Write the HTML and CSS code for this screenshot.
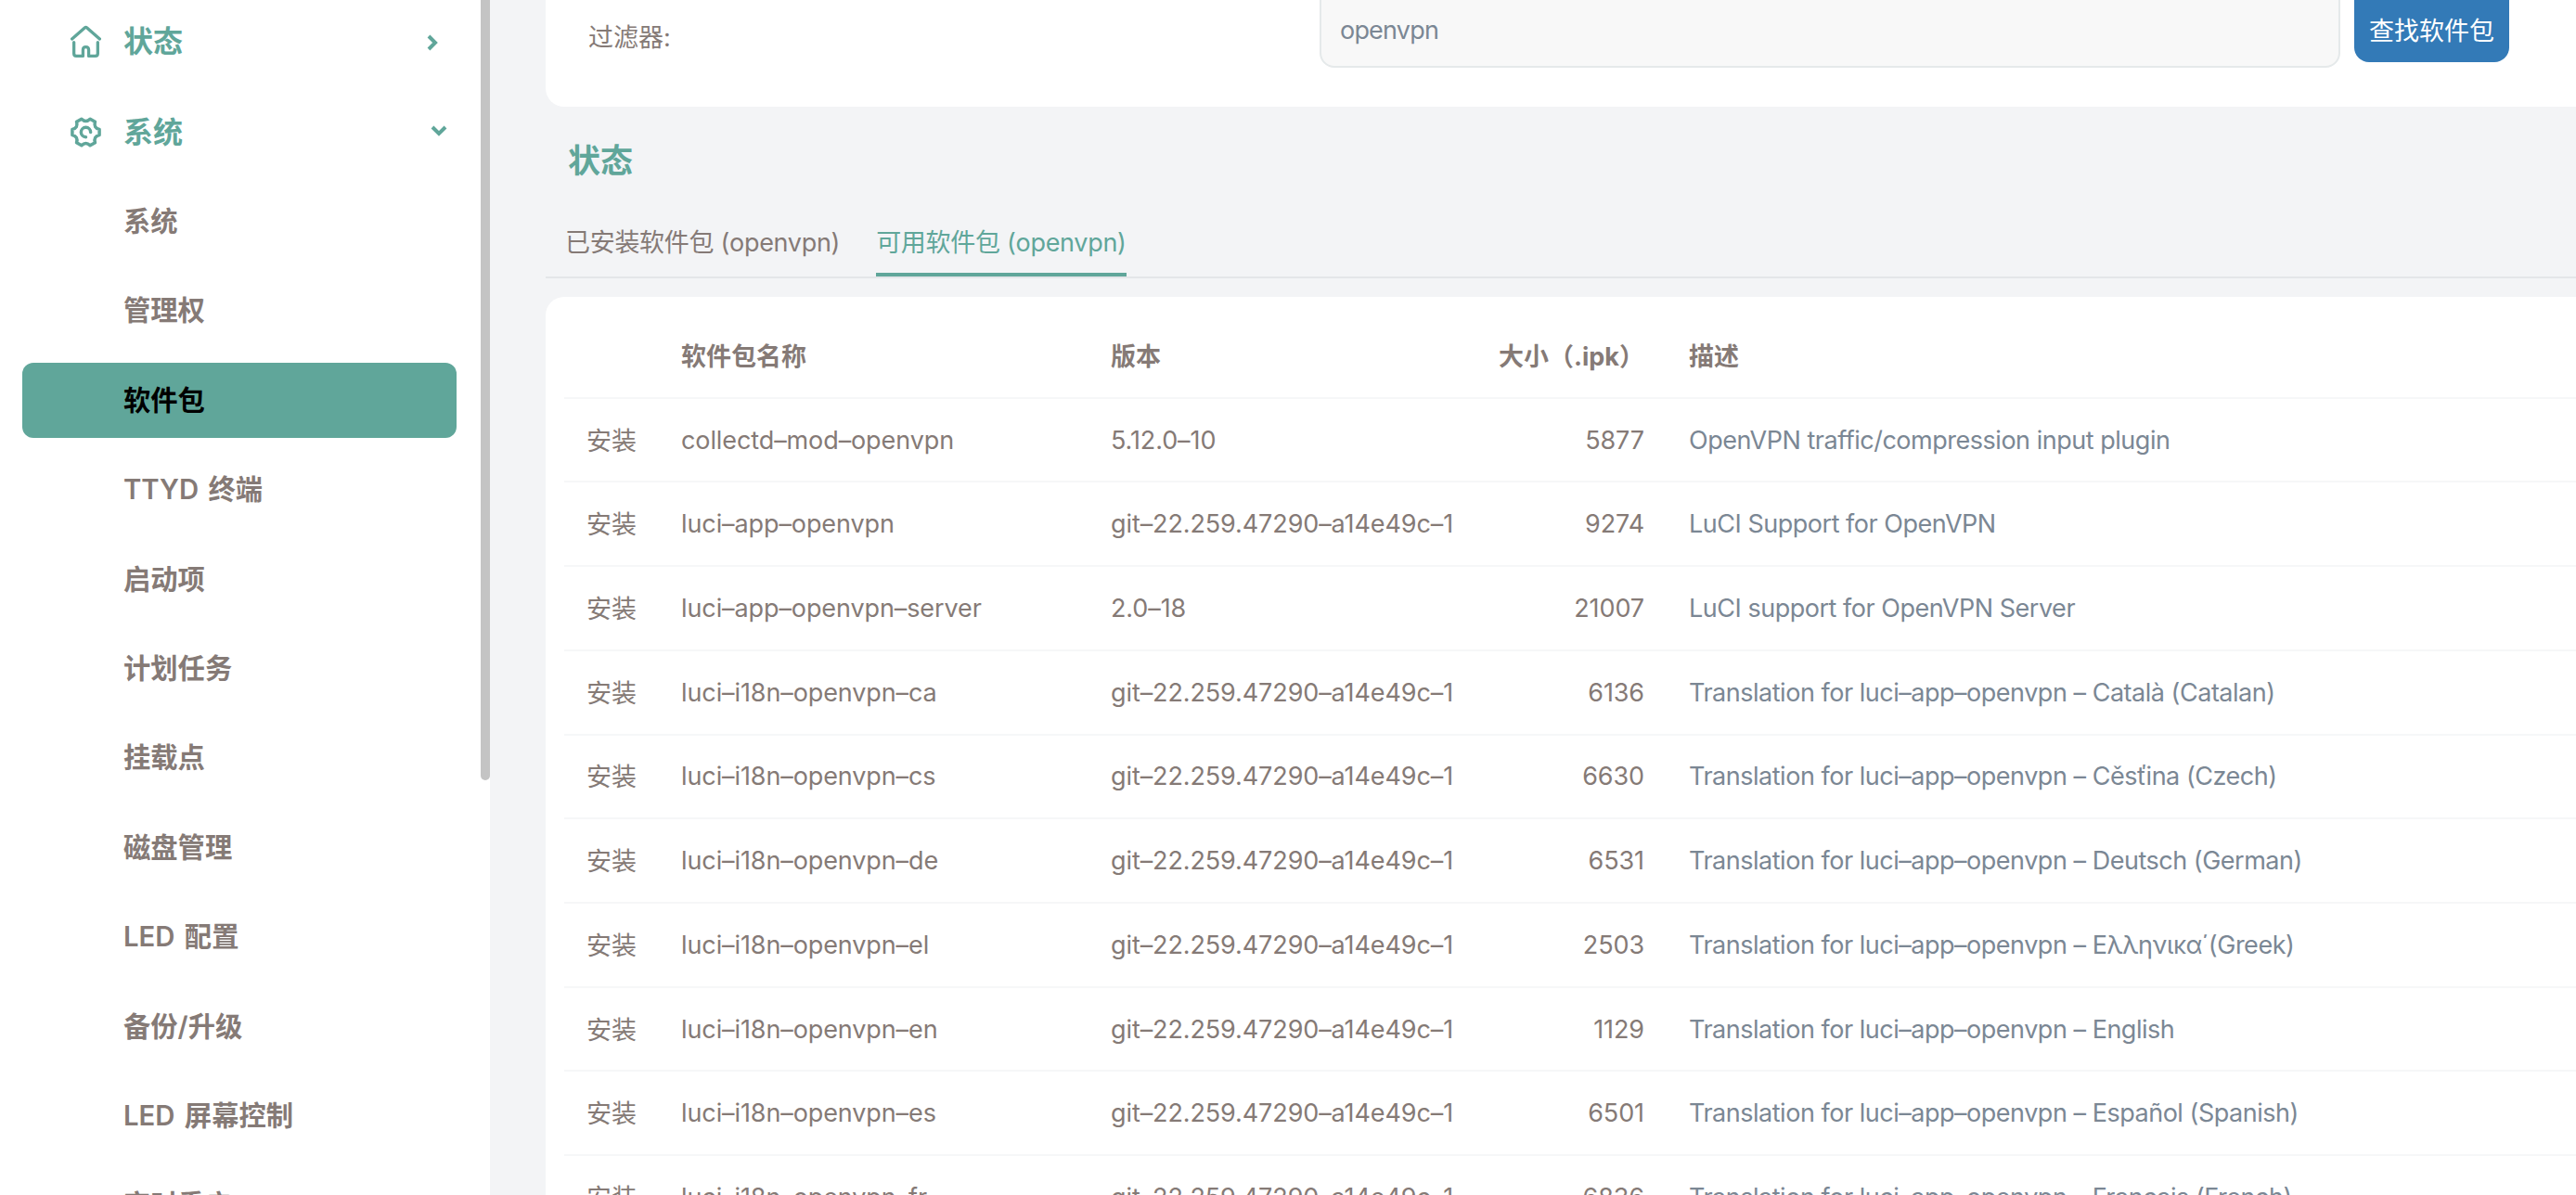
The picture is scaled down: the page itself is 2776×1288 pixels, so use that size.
FILE: index.html
```
<!DOCTYPE html>
<html lang="zh-CN">

<head>
    <meta charset="UTF-8">
    <meta name="viewport" content="width=device-width, initial-scale=1.0">
    <link rel="stylesheet" href="styles.css">
    <title>软件包 - LuCI</title>
</head>

<body>
    <aside class="sidebar">
        <ul class="nav">
            <li class="group">
                <svg class="icon" viewBox="0 0 32 36" fill="none" stroke="currentColor" stroke-width="3.200" stroke-linecap="round" stroke-linejoin="round">
                    <path d="M1.500 15.500 14.800 3.800q1.200-1 2.400 0L30.500 15.500" />
                    <path d="M3.500 19v12q0 2.500 2.500 2.500h7V27q0-3 3-3t3 3v6.500h7q2.500 0 2.500-2.500V19" />
                </svg>
                <span>状态</span>
                <svg class="arrow right" viewBox="0 0 12 18" fill="none" stroke="currentColor" stroke-width="4">
                    <path d="M2 2l7 7-7 7" />
                </svg>
            </li>
            <li class="group">
                <svg class="icon" viewBox="0 -2 32 36" fill="none" stroke="currentColor" stroke-width="3.400" stroke-linecap="round" stroke-linejoin="round">
                    <path d="M30.200 13v6Q23.800 20.400 25.700 26.900L20.500 29.900Q16 25.500 11.500 29.900L6.300 26.900Q8.200 20.400 1.800 19V13Q8.200 11.600 6.300 5.100L11.500 2.100Q16 6.500 20.500 2.100L25.700 5.100Q23.800 11.600 30.200 13z" />
                    <path d="M16 21a5 5 0 1 1 5-5" />
                </svg>
                <span>系统</span>
                <svg class="arrow down" viewBox="0 0 18 12" fill="none" stroke="currentColor" stroke-width="4">
                    <path d="M2 2l7 7 7-7" />
                </svg>
            </li>
        </ul>
        <ul class="subnav">
            <li>系统</li>
            <li>管理权</li>
            <li class="active">软件包</li>
            <li>TTYD 终端</li>
            <li>启动项</li>
            <li>计划任务</li>
            <li>挂载点</li>
            <li>磁盘管理</li>
            <li>LED 配置</li>
            <li>备份/升级</li>
            <li>LED 屏幕控制</li>
            <li>定时重启</li>
        </ul>
        <div class="scrollbar"></div>
    </aside>

    <main class="main">
        <section class="panel filter">
            <label for="filter">过滤器:</label>
            <input id="filter" type="text" value="openvpn">
            <button class="btn">查找软件包</button>
        </section>

        <h3 class="title">状态</h3>
        <ul class="tabs">
            <li>已安装软件包 (openvpn)</li>
            <li class="active">可用软件包 (openvpn)</li>
        </ul>

        <section class="panel packages">
            <table>
                <thead>
                    <tr>
                        <th class="action"></th>
                        <th class="name">软件包名称</th>
                        <th class="version">版本</th>
                        <th class="size">大小（.ipk）</th>
                        <th class="desc">描述</th>
                    </tr>
                </thead>
                <tbody>
                    <tr>
                        <td class="install">安装</td>
                        <td>collectd–mod–openvpn</td>
                        <td>5.12.0–10</td>
                        <td class="size">5877</td>
                        <td class="desc">OpenVPN traffic/compression input plugin</td>
                    </tr>
                    <tr>
                        <td class="install">安装</td>
                        <td>luci–app–openvpn</td>
                        <td>git–22.259.47290–a14e49c–1</td>
                        <td class="size">9274</td>
                        <td class="desc">LuCI Support for OpenVPN</td>
                    </tr>
                    <tr>
                        <td class="install">安装</td>
                        <td>luci–app–openvpn–server</td>
                        <td>2.0–18</td>
                        <td class="size">21007</td>
                        <td class="desc">LuCI support for OpenVPN Server</td>
                    </tr>
                    <tr>
                        <td class="install">安装</td>
                        <td>luci–i18n–openvpn–ca</td>
                        <td>git–22.259.47290–a14e49c–1</td>
                        <td class="size">6136</td>
                        <td class="desc">Translation for luci–app–openvpn – Català (Catalan)</td>
                    </tr>
                    <tr>
                        <td class="install">安装</td>
                        <td>luci–i18n–openvpn–cs</td>
                        <td>git–22.259.47290–a14e49c–1</td>
                        <td class="size">6630</td>
                        <td class="desc">Translation for luci–app–openvpn – Cěsťina (Czech)</td>
                    </tr>
                    <tr>
                        <td class="install">安装</td>
                        <td>luci–i18n–openvpn–de</td>
                        <td>git–22.259.47290–a14e49c–1</td>
                        <td class="size">6531</td>
                        <td class="desc">Translation for luci–app–openvpn – Deutsch (German)</td>
                    </tr>
                    <tr>
                        <td class="install">安装</td>
                        <td>luci–i18n–openvpn–el</td>
                        <td>git–22.259.47290–a14e49c–1</td>
                        <td class="size">2503</td>
                        <td class="desc">Translation for luci–app–openvpn – Ελληνικα΄(Greek)</td>
                    </tr>
                    <tr>
                        <td class="install">安装</td>
                        <td>luci–i18n–openvpn–en</td>
                        <td>git–22.259.47290–a14e49c–1</td>
                        <td class="size">1129</td>
                        <td class="desc">Translation for luci–app–openvpn – English</td>
                    </tr>
                    <tr>
                        <td class="install">安装</td>
                        <td>luci–i18n–openvpn–es</td>
                        <td>git–22.259.47290–a14e49c–1</td>
                        <td class="size">6501</td>
                        <td class="desc">Translation for luci–app–openvpn – Español (Spanish)</td>
                    </tr>
                    <tr>
                        <td class="install">安装</td>
                        <td>luci–i18n–openvpn–fr</td>
                        <td>git–22.259.47290–a14e49c–1</td>
                        <td class="size">6836</td>
                        <td class="desc">Translation for luci–app–openvpn – Français (French)</td>
                    </tr>
                </tbody>
            </table>
        </section>
    </main>
</body>

</html>
```
FILE: styles.css
```
* {
    margin: 0;
    padding: 0;
    box-sizing: border-box;
}

body {
    display: flex;
    height: 100vh;
    overflow: hidden;
    background: #f3f4f6;
    color: #857a76;
    font-family: Inter, "Noto Sans CJK SC", sans-serif;
    font-size: 27px;
}

ul {
    list-style: none;
}

.sidebar {
    position: relative;
    flex: none;
    width: 528px;
    height: 100vh;
    padding: 0 36px 0 24px;
    overflow: hidden;
    background: #fff;
    font-weight: 600;
}

.scrollbar {
    position: absolute;
    top: 0;
    right: 0;
    width: 10px;
    height: 841px;
    background: #c4c4c4;
    border-radius: 0 0 5px 5px;
}

.nav {
    margin-top: -5px;
}

.group {
    display: flex;
    align-items: center;
    height: 98px;
    padding: 0 8px 0 52px;
    color: #60a69a;
    font-size: 32px;
}

.group span {
    padding-bottom: 4px;
}

.icon {
    width: 33px;
    height: 37px;
    margin-right: 24px;
}

.arrow {
    margin-left: auto;
}

.right {
    width: 12px;
    height: 18px;
    margin-right: 12px;
    margin-top: 4px;
}

.down {
    width: 18px;
    height: 12px;
    margin-right: 2px;
    margin-bottom: 2px;
}

.subnav {
    margin-top: 7px;
}

.subnav li {
    height: 81px;
    margin-bottom: 15.400px;
    padding-left: 109px;
    border-radius: 12px;
    font-size: 29.300px;
    line-height: 82px;
    word-spacing: 3px;
}

.subnav .active {
    background: #60a69a;
    color: #000;
}

.main {
    flex: 1;
    padding-left: 60px;
}

.panel {
    width: 2300px;
    background: #fff;
    border-radius: 20px;
}

.filter {
    display: flex;
    height: 155px;
    margin-top: -40px;
    padding-left: 46px;
}

.filter label {
    width: 788px;
    line-height: 162px;
}

.filter input {
    width: 1100px;
    height: 113px;
    padding: 32px 20px 0;
    background: #f8f8f8;
    border: 2px solid #e5e9ea;
    border-radius: 16px;
    color: #7b8794;
    font: inherit;
    letter-spacing: -0.8px;
}

.btn {
    width: 167px;
    height: 87px;
    margin: 20px 0 0 15px;
    padding-top: 15px;
    background: #337ab7;
    border: none;
    border-radius: 16px;
    color: #fff;
    font: inherit;
}

.title {
    padding: 32px 0 0 24px;
    color: #60a69a;
    font-size: 35px;
    line-height: 52px;
}

.tabs {
    display: flex;
    gap: 39px;
    height: 101px;
    padding-left: 21px;
    border-bottom: 2px solid #e4e6e9;
}

.tabs li {
    height: 99px;
    padding-top: 43px;
    line-height: 40px;
    letter-spacing: -0.3px;
}

.tabs .active {
    border-bottom: 4px solid #60a69a;
    color: #60a69a;
}

.packages {
    margin-top: 20px;
    padding: 18px 20px 20px;
}

table {
    width: 2260px;
    table-layout: fixed;
    border-collapse: collapse;
}

tr {
    height: 90.720px;
    border-bottom: 2px solid #f6f7f8;
}

th,
td {
    padding: 0 0 0 24px;
    text-align: left;
    white-space: nowrap;
}

td {
    letter-spacing: -0.1px;
}

.action {
    width: 102px;
}

.name {
    width: 463px;
}

.version {
    width: 416px;
}

th.size {
    width: 207px;
}

th.desc {
    width: auto;
}

.size {
    padding: 0 24px 0 0;
    text-align: right;
}

.install {
    padding-bottom: 2px;
    letter-spacing: 0;
}

td.desc {
    color: #7b8794;
    letter-spacing: -0.480px;
}
```
